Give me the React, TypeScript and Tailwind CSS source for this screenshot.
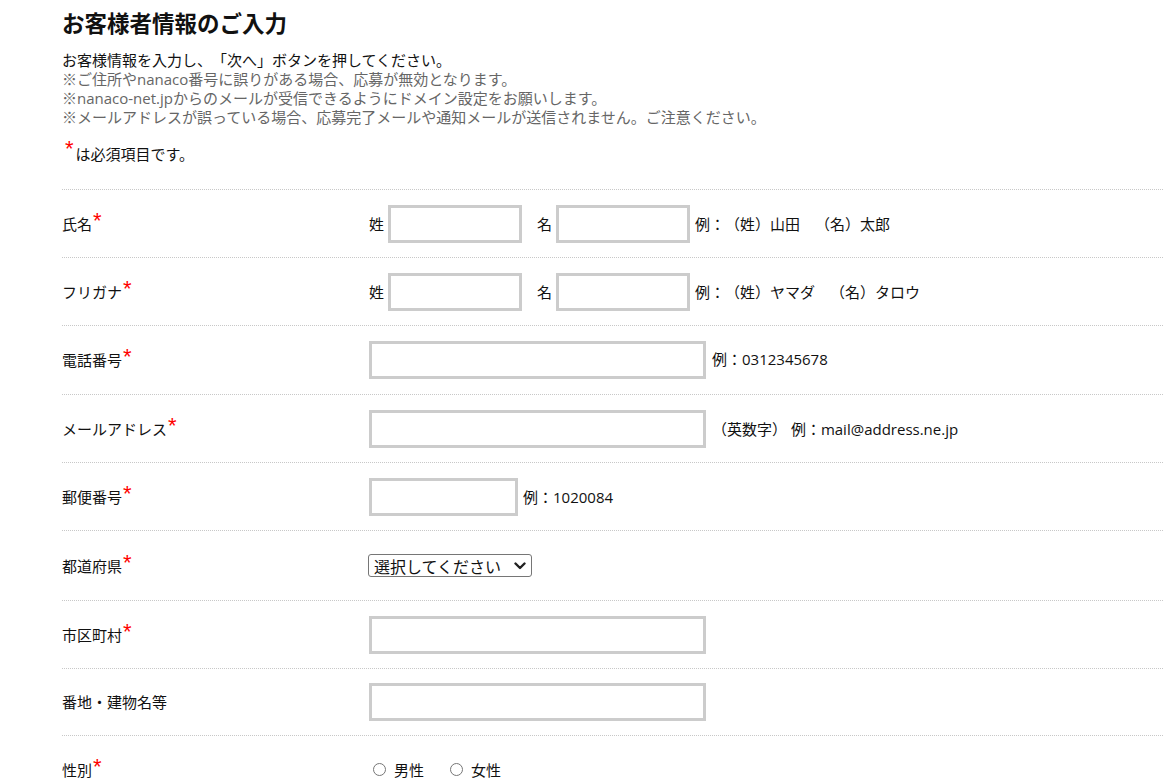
import React from "react";

const font = { fontFamily: '"Open Sans", "Noto Sans CJK JP", sans-serif' };

function Star() {
  return (
    <span className="relative -top-[3px] ml-[1px] text-[22px] leading-none text-[#ff0000]" style={{ fontFamily: '"Liberation Sans", sans-serif' }}>
      *
    </span>
  );
}

function Row({ label, required = true, h = "h-[68px]", children }: { label: string; required?: boolean; h?: string; children: React.ReactNode }) {
  return (
    <div className={`flex ${h} items-center border-b border-dotted border-[#c8c8c8]`}>
      <div className="flex w-[307px] shrink-0 items-center text-[15px] leading-[22px] text-[#111]">
        <span>{label}</span>
        {required && <Star />}
      </div>
      <div className="flex items-center text-[15px] leading-[22px] text-[#111]">{children}</div>
    </div>
  );
}

function Box({ w }: { w: string }) {
  return <input type="text" className={`${w} h-[38px] border-[3px] border-solid border-[#cccccc] bg-white outline-none`} />;
}

export default function App() {
  return (
    <div className="h-[780px] w-full overflow-hidden bg-white text-[#111] [text-spacing-trim:space-all]" style={font}>
      <div className="ml-[62px]">
        <h1 className="pt-[9px] text-[22.5px] font-bold leading-[30px] text-[#111]">お客様者情報のご入力</h1>
        <div className="mt-[12px] text-[15px] leading-[19px]">
          <p className="text-[#111]">お客様情報を入力し、「次へ」ボタンを押してください。</p>
          <p className="text-[#666]">※ご住所やnanaco番号に誤りがある場合、応募が無効となります。</p>
          <p className="text-[#666]">※nanaco-net.jpからのメールが受信できるようにドメイン設定をお願いします。</p>
          <p className="text-[#666]">※メールアドレスが誤っている場合、応募完了メールや通知メールが送信されません。ご注意ください。</p>
        </div>
        <p className="mt-[16px] flex items-center text-[15px] leading-[20px] text-[#111]">
          <span className="relative -top-[5px] ml-[3px] mr-[2px] text-[22px] leading-none text-[#ff0000]" style={{ fontFamily: '"Liberation Sans", sans-serif' }}>*</span>
          <span>は必須項目です。</span>
        </p>

        <div className="mt-[24px] border-t border-dotted border-[#c8c8c8]">
          <Row label="氏名">
            <span className="mr-[4px]">姓</span>
            <Box w="w-[134px]" />
            <span className="ml-[15px] mr-[4px]">名</span>
            <Box w="w-[134px]" />
            <span className="ml-[5px]">例：（姓）山田　（名）太郎</span>
          </Row>
          <Row label="フリガナ">
            <span className="mr-[4px]">姓</span>
            <Box w="w-[134px]" />
            <span className="ml-[15px] mr-[4px]">名</span>
            <Box w="w-[134px]" />
            <span className="ml-[5px]">例：（姓）ヤマダ　（名）タロウ</span>
          </Row>
          <Row label="電話番号" h="h-[69px]">
            <Box w="w-[337px]" />
            <span className="ml-[6px] -mt-[3px]">例：0312345678</span>
          </Row>
          <Row label="メールアドレス">
            <Box w="w-[337px]" />
            <span className="ml-[6px]">（英数字） 例：mail@address.ne.jp</span>
          </Row>
          <Row label="郵便番号">
            <Box w="w-[149px]" />
            <span className="ml-[5px]">例：1020084</span>
          </Row>
          <Row label="都道府県" h="h-[70px]">
            <div className="-ml-[1px] flex h-[23px] w-[164px] items-center rounded-[3px] border border-solid border-[#767676] bg-white">
              <select className="h-full flex-1 appearance-none bg-transparent pl-[5px] text-[16px] leading-[20px] text-[#111] outline-none" style={{ fontFamily: '"Noto Sans CJK JP", sans-serif' }}>
                <option>選択してください</option>
              </select>
              <svg width="12" height="8" viewBox="0 0 12 8" className="mr-[5px] shrink-0">
                <path d="M1.5 1.5 L6 6 L10.5 1.5" fill="none" stroke="#222" strokeWidth="2.4" strokeLinecap="round" strokeLinejoin="round" />
              </svg>
            </div>
          </Row>
          <Row label="市区町村">
            <Box w="w-[337px]" />
          </Row>
          <Row label="番地・建物名等" required={false} h="h-[67px]">
            <Box w="w-[337px]" />
          </Row>
          <Row label="性別" h="h-[68px]">
            <label className="ml-[4px] flex items-center">
              <input type="radio" name="g" className="m-0 h-[13px] w-[13px]" />
              <span className="ml-[8px]">男性</span>
            </label>
            <label className="ml-[26px] flex items-center">
              <input type="radio" name="g" className="m-0 h-[13px] w-[13px]" />
              <span className="ml-[8px]">女性</span>
            </label>
          </Row>
        </div>
      </div>
    </div>
  );
}
